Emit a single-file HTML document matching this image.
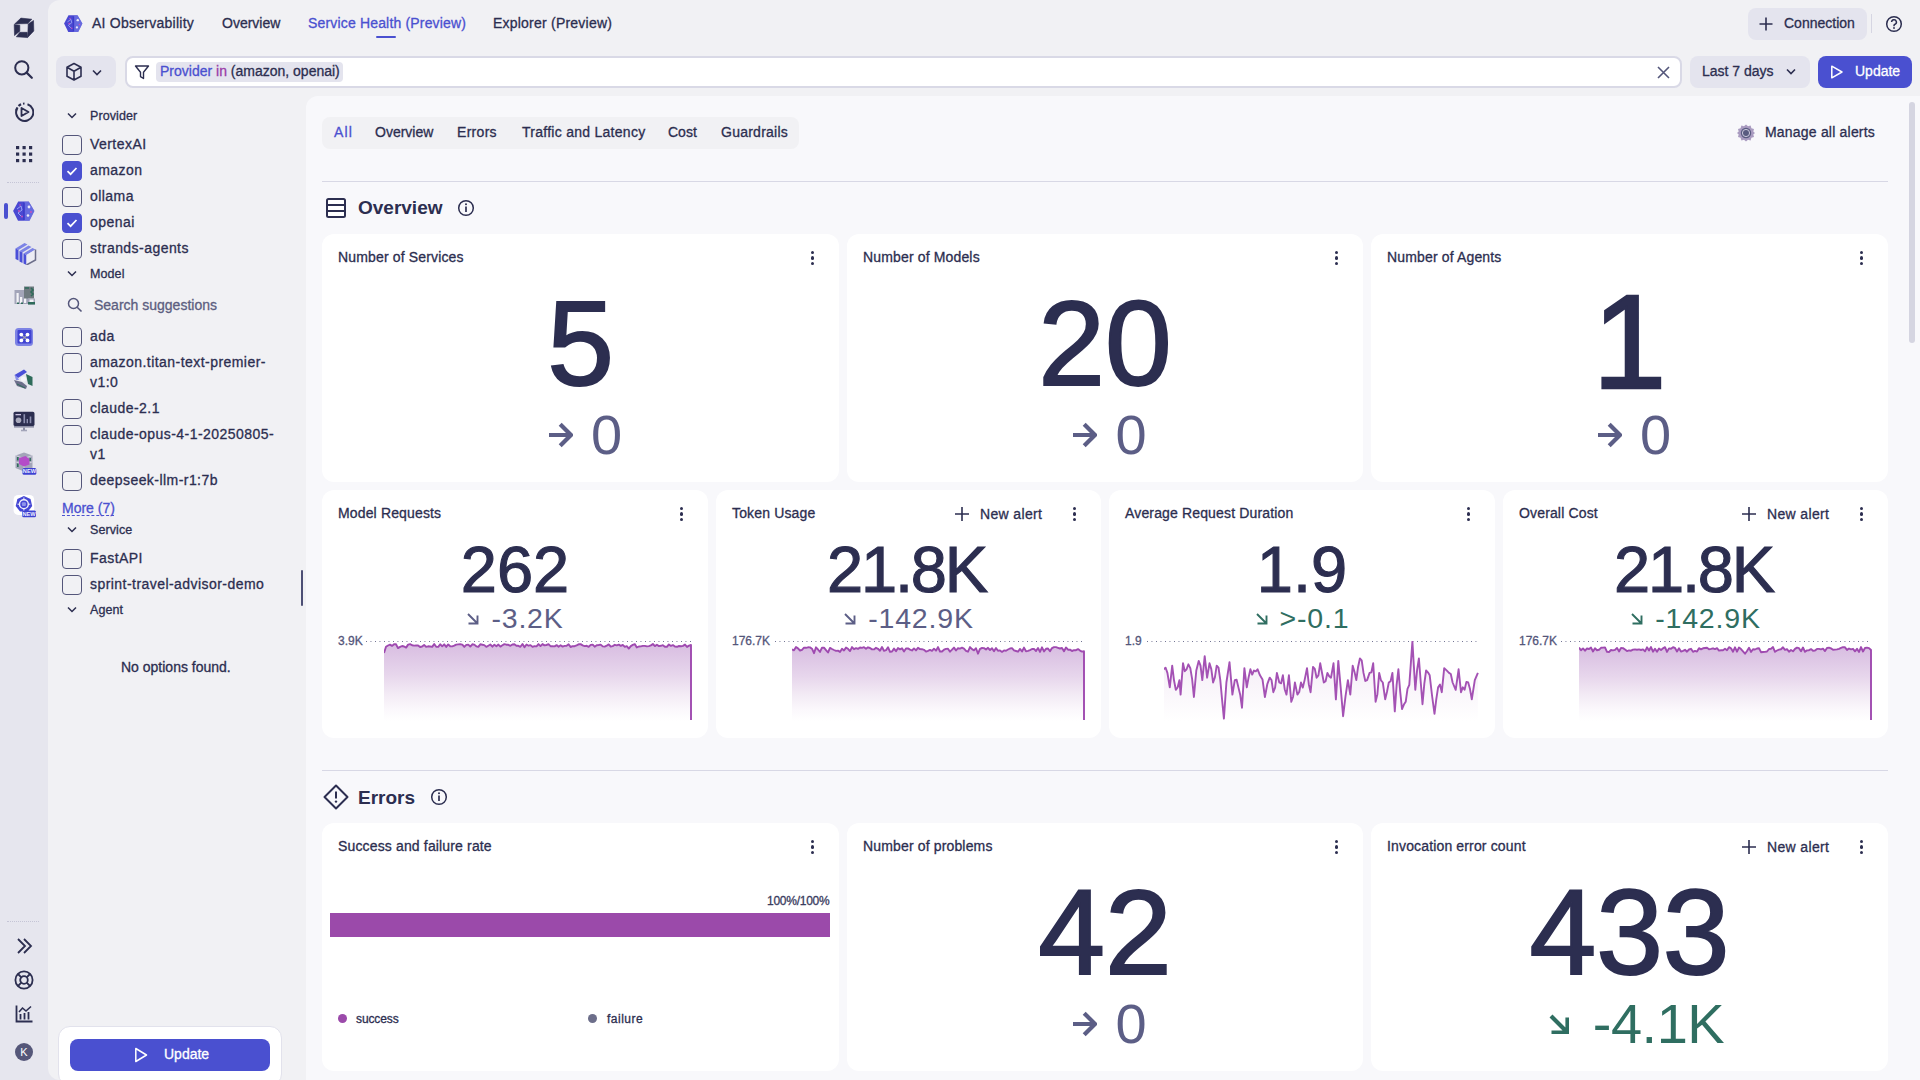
<!DOCTYPE html><html><head><meta charset="utf-8"><style>
*{box-sizing:border-box;margin:0;padding:0}
html,body{width:1920px;height:1080px;overflow:hidden}
body{background:#e6e6ee;font-family:"Liberation Sans",sans-serif;color:#2c2e50;font-size:14px;position:relative}
.a{position:absolute}
.t{position:absolute;white-space:nowrap;line-height:1}
#iconbar{left:0;top:0;width:48px;height:1080px;background:#e6e6ee}
#main{left:48px;top:0;width:1872px;height:1080px;background:#f1f1f4;border-radius:12px 0 0 12px}
#content{left:306px;top:96px;width:1614px;height:984px;background:#f8f8fb;border-top-left-radius:12px}
.card{position:absolute;background:#fff;border-radius:12px}
.ctitle{position:absolute;left:16px;top:15px;font-size:14px;line-height:16px;white-space:nowrap;color:#2c2e50;letter-spacing:0.15px}
.kebab{position:absolute;top:17px;width:4px;height:14px}
.kebab i{position:absolute;left:0;width:3.2px;height:3.2px;border-radius:50%;background:#2c2e50}
.big{position:absolute;left:0;right:0;text-align:center;white-space:nowrap;color:#2c2e50;line-height:1}
.trend{position:absolute;left:0;right:0;text-align:center;white-space:nowrap;line-height:1}
.cb{position:absolute;left:62px;width:20px;height:20px;border:1.5px solid #54567a;border-radius:4px}
.cb.on{background:#4a50d0;border-color:#4a50d0}
.lbl{position:absolute;left:90px;font-size:14px;line-height:20px;white-space:nowrap;letter-spacing:0.45px}
.hdr{position:absolute;left:90px;font-size:12.5px;line-height:14px;white-space:nowrap;letter-spacing:0.1px}
.chev{position:absolute;left:67px}
.t,.lbl,.hdr,.ctitle{-webkit-text-stroke:0.3px currentColor}
</style></head><body>
<div id="iconbar" class="a"></div><div id="main" class="a"></div><div id="content" class="a"></div><svg class="a" style="left:64px;top:15px" width="19" height="17" viewBox="0 0 19 17"><g transform="scale(0.86)"><polygon points="5.2,0.4 15.8,0.4 21.4,10 16.5,19.8 5,19.8 0.1,10" fill="#4a48d2"/><path d="M11 1 H15.8 L21.4 10 L16.5 19.8 H11 Z" fill="#7d86ea" opacity="0.55"/><path d="M11 1.5 V19" stroke="#3a3ac8" stroke-width="1.6"/><path d="M4 8 L8 5 L9 9 L5 12 L8 15" fill="none" stroke="#9aa4f4" stroke-width="1"/><circle cx="16" cy="6" r="1.4" fill="#e8e8f8"/><circle cx="15" cy="14.5" r="1.3" fill="#e8e8f8"/><circle cx="6" cy="10" r="0.9" fill="#d04fb8"/><circle cx="9" cy="15.5" r="0.9" fill="#d04fb8"/><circle cx="18" cy="11" r="0.9" fill="#d04fb8"/><circle cx="7" cy="4" r="0.8" fill="#d04fb8"/></g></svg><div class="t" style="left:92px;top:15px;font-size:14px;line-height:16px;letter-spacing:0.25px">AI Observability</div><div class="t" style="left:222px;top:15px;font-size:14px;line-height:16px">Overview</div><div class="t" style="left:308px;top:15px;font-size:14px;line-height:16px;color:#4a50d0;letter-spacing:0.17px">Service Health (Preview)</div><div class="a" style="left:376px;top:36px;width:20px;height:2px;background:#4a50d0;border-radius:1px"></div><div class="t" style="left:493px;top:15px;font-size:14px;line-height:16px;letter-spacing:0.22px">Explorer (Preview)</div><div class="a" style="left:1748px;top:8px;width:119px;height:32px;background:#e4e4ee;border-radius:8px"></div><svg class="a" style="left:1759px;top:17px" width="14" height="14" viewBox="0 0 14 14"><path d="M7 0.5V13.5M0.5 7H13.5" stroke="#2c2e50" stroke-width="1.6"/></svg><div class="t" style="left:1784px;top:15px;font-size:14px;line-height:16px">Connection</div><div class="a" style="left:1871px;top:14px;width:1px;height:19px;background:#d6d6e2"></div><svg class="a" style="left:1885px;top:15px" width="18" height="18" viewBox="0 0 18 18"><circle cx="9" cy="9" r="7.3" fill="none" stroke="#2c2e50" stroke-width="1.5"/><path d="M6.6 7.1a2.4 2.4 0 1 1 3.4 2.2c-.7.3-1 .8-1 1.5v.4" fill="none" stroke="#2c2e50" stroke-width="1.5"/><circle cx="9" cy="13" r="0.9" fill="#2c2e50"/></svg><div class="a" style="left:56px;top:56px;width:60px;height:32px;background:#e4e4ee;border-radius:8px"></div><svg class="a" style="left:65px;top:62px" width="18" height="20" viewBox="0 0 18 20"><path d="M9 1.5 L16 5.3 V14.2 L9 18 L2 14.2 V5.3 Z M2 5.3 L9 9.2 L16 5.3 M9 9.2 V18" fill="none" stroke="#2c2e50" stroke-width="1.6" stroke-linejoin="round"/></svg><svg class="a" style="left:92px;top:69px" width="10" height="8" viewBox="0 0 10 8"><path d="M1 1.5 L5.0 5.5 L9 1.5" fill="none" stroke="#2c2e50" stroke-width="1.6"/></svg><div class="a" style="left:125px;top:56px;width:1557px;height:32px;background:#fff;border:2px solid #d9d9e6;border-radius:8px"></div><svg class="a" style="left:134px;top:64px" width="16" height="16" viewBox="0 0 16 16"><path d="M1.5 2 H14.5 L9.5 8.2 V14.5 L6.5 12.6 V8.2 Z" fill="none" stroke="#2c2e50" stroke-width="1.4" stroke-linejoin="round"/></svg><div class="a" style="left:156px;top:62px;width:187px;height:20px;background:#e4e4ee;border-radius:4px"></div><div class="t" style="left:160px;top:63px;font-size:14px;line-height:16px"><span style="color:#4a50d0">Provider </span><span style="color:#9a3ca8">in</span> (amazon, openai)</div><svg class="a" style="left:1657px;top:66px" width="13" height="13" viewBox="0 0 13 13"><path d="M1 1L12 12M12 1L1 12" stroke="#54567a" stroke-width="1.6"/></svg><div class="a" style="left:1690px;top:56px;width:120px;height:32px;background:#e4e4ee;border-radius:8px"></div><div class="t" style="left:1702px;top:63px;font-size:14px;line-height:16px">Last 7 days</div><svg class="a" style="left:1786px;top:68px" width="10" height="8" viewBox="0 0 10 8"><path d="M1 1.5 L5.0 5.5 L9 1.5" fill="none" stroke="#2c2e50" stroke-width="1.6"/></svg><div class="a" style="left:1818px;top:56px;width:94px;height:32px;background:#4a50d0;border-radius:8px"></div><svg class="a" style="left:1830px;top:65px" width="14" height="14" viewBox="0 0 14 14"><path d="M1.8 1.2 L12 7 L1.8 12.8 Z" fill="none" stroke="#fff" stroke-width="1.5" stroke-linejoin="round"/></svg><div class="t" style="left:1855px;top:63px;font-size:14px;line-height:16px;color:#fff">Update</div><svg class="a" style="left:67px;top:112px" width="10" height="8" viewBox="0 0 10 8"><path d="M1 1.5 L5.0 5.5 L9 1.5" fill="none" stroke="#2c2e50" stroke-width="1.5"/></svg><div class="hdr" style="top:109px">Provider</div><div class="cb" style="top:135px"></div><div class="lbl" style="top:134px">VertexAI</div><div class="cb on" style="top:161px"></div><svg class="a" style="left:62px;top:161px" width="20" height="20" viewBox="0 0 20 20"><path d="M5.5 10.2 L8.6 13.2 L14.5 7" fill="none" stroke="#fff" stroke-width="1.7"/></svg><div class="lbl" style="top:160px">amazon</div><div class="cb" style="top:187px"></div><div class="lbl" style="top:186px">ollama</div><div class="cb on" style="top:213px"></div><svg class="a" style="left:62px;top:213px" width="20" height="20" viewBox="0 0 20 20"><path d="M5.5 10.2 L8.6 13.2 L14.5 7" fill="none" stroke="#fff" stroke-width="1.7"/></svg><div class="lbl" style="top:212px">openai</div><div class="cb" style="top:239px"></div><div class="lbl" style="top:238px">strands-agents</div><svg class="a" style="left:67px;top:270px" width="10" height="8" viewBox="0 0 10 8"><path d="M1 1.5 L5.0 5.5 L9 1.5" fill="none" stroke="#2c2e50" stroke-width="1.5"/></svg><div class="hdr" style="top:267px">Model</div><svg class="a" style="left:67px;top:297px" width="16" height="16" viewBox="0 0 16 16"><circle cx="6.5" cy="6.5" r="5" fill="none" stroke="#54567a" stroke-width="1.5"/><path d="M10.2 10.2 L14.5 14.5" stroke="#54567a" stroke-width="1.6"/></svg><div class="lbl" style="left:94px;top:295px;color:#5c5e80;letter-spacing:0">Search suggestions</div><div class="cb" style="top:327px"></div><div class="lbl" style="top:326px">ada</div><div class="cb" style="top:353px"></div><div class="lbl" style="top:352px">amazon.titan-text-premier-<br>v1:0</div><div class="cb" style="top:399px"></div><div class="lbl" style="top:398px">claude-2.1</div><div class="cb" style="top:425px"></div><div class="lbl" style="top:424px">claude-opus-4-1-20250805-<br>v1</div><div class="cb" style="top:471px"></div><div class="lbl" style="top:470px">deepseek-llm-r1:7b</div><div class="t" style="left:62px;top:500px;font-size:14px;line-height:16px;color:#4a50d0">More (7)</div><div class="a" style="left:62px;top:515px;width:52px;height:0;border-top:1px dashed #4a50d0"></div><svg class="a" style="left:67px;top:526px" width="10" height="8" viewBox="0 0 10 8"><path d="M1 1.5 L5.0 5.5 L9 1.5" fill="none" stroke="#2c2e50" stroke-width="1.5"/></svg><div class="hdr" style="top:523px">Service</div><div class="cb" style="top:549px"></div><div class="lbl" style="top:548px">FastAPI</div><div class="cb" style="top:575px"></div><div class="lbl" style="top:574px">sprint-travel-advisor-demo</div><svg class="a" style="left:67px;top:606px" width="10" height="8" viewBox="0 0 10 8"><path d="M1 1.5 L5.0 5.5 L9 1.5" fill="none" stroke="#2c2e50" stroke-width="1.5"/></svg><div class="hdr" style="top:603px">Agent</div><div class="t" style="left:121px;top:659px;font-size:14px;line-height:16px">No options found.</div><div class="a" style="left:301px;top:570px;width:2px;height:36px;background:#4d4f75;border-radius:1px"></div><div class="a" style="left:58px;top:1026px;width:224px;height:60px;background:#fff;border:1px solid #e2e2ec;border-radius:12px"></div><div class="a" style="left:70px;top:1039px;width:200px;height:32px;background:#4a50d0;border-radius:8px"></div><svg class="a" style="left:134px;top:1047px" width="14" height="16" viewBox="0 0 14 16"><path d="M1.8 1.5 L12.5 8 L1.8 14.5 Z" fill="none" stroke="#fff" stroke-width="1.5" stroke-linejoin="round"/></svg><div class="t" style="left:164px;top:1046px;font-size:14px;line-height:16px;color:#fff">Update</div><div class="a" style="left:1909px;top:102px;width:6px;height:241px;background:#d5d5e1;border-radius:3px"></div><div class="a" style="left:322px;top:117px;width:477px;height:32px;background:#f1f1f4;border-radius:8px"></div><div class="t" style="left:334px;top:124px;font-size:14px;line-height:16px;letter-spacing:1.2px;color:#4a50d0">All</div><div class="t" style="left:375px;top:124px;font-size:14px;line-height:16px;letter-spacing:0px;">Overview</div><div class="t" style="left:457px;top:124px;font-size:14px;line-height:16px;letter-spacing:0.3px;">Errors</div><div class="t" style="left:522px;top:124px;font-size:14px;line-height:16px;letter-spacing:0.27px;">Traffic and Latency</div><div class="t" style="left:668px;top:124px;font-size:14px;line-height:16px;letter-spacing:0px;">Cost</div><div class="t" style="left:721px;top:124px;font-size:14px;line-height:16px;letter-spacing:0.25px;">Guardrails</div><svg class="a" style="left:1737px;top:124px" width="18" height="18" viewBox="0 0 18 18"><path d="M9 0.5 L11 2.3 L13.6 1.6 L14.4 4.2 L17 5 L16.3 7.6 L18 9 L16.3 10.4 L17 13 L14.4 13.8 L13.6 16.4 L11 15.7 L9 17.5 L7 15.7 L4.4 16.4 L3.6 13.8 L1 13 L1.7 10.4 L0 9 L1.7 7.6 L1 5 L3.6 4.2 L4.4 1.6 L7 2.3 Z" fill="#a99bc0"/><circle cx="9" cy="9" r="5.2" fill="#595b80"/><circle cx="9" cy="9" r="3.6" fill="none" stroke="#d8d4e6" stroke-width="0.9"/></svg><div class="t" style="left:1765px;top:124px;font-size:14px;line-height:16px;letter-spacing:0.2px">Manage all alerts</div><div class="a" style="left:322px;top:181px;width:1566px;height:1px;background:#d8d8e5"></div><svg class="a" style="left:325px;top:197px" width="22" height="22" viewBox="0 0 22 22"><rect x="2" y="2" width="18" height="18" rx="1.5" fill="#fff" stroke="#2c2e50" stroke-width="2"/><path d="M2 8 H20 M2 14 H20" stroke="#2c2e50" stroke-width="2"/></svg><div class="t" style="left:358px;top:198px;font-size:19px;line-height:20px;font-weight:bold;-webkit-text-stroke:0">Overview</div><svg class="a" style="left:457px;top:199px" width="18" height="18" viewBox="0 0 18 18"><circle cx="9" cy="9" r="7.3" fill="none" stroke="#2c2e50" stroke-width="1.5"/><path d="M9 7.6 V13" stroke="#2c2e50" stroke-width="1.7"/><circle cx="9" cy="5.3" r="1" fill="#2c2e50"/></svg><div class="a" style="left:322px;top:770px;width:1566px;height:1px;background:#d8d8e5"></div><svg class="a" style="left:323px;top:784px" width="26" height="26" viewBox="0 0 26 26"><path d="M13 1.5 L24.5 13 L13 24.5 L1.5 13 Z" fill="none" stroke="#2c2e50" stroke-width="2" stroke-linejoin="round"/><path d="M13 7.5 V14.5" stroke="#2c2e50" stroke-width="2"/><circle cx="13" cy="17.6" r="1.2" fill="#2c2e50"/></svg><div class="t" style="left:358px;top:788px;font-size:19px;line-height:20px;font-weight:bold;-webkit-text-stroke:0">Errors</div><svg class="a" style="left:430px;top:788px" width="18" height="18" viewBox="0 0 18 18"><circle cx="9" cy="9" r="7.3" fill="none" stroke="#2c2e50" stroke-width="1.5"/><path d="M9 7.6 V13" stroke="#2c2e50" stroke-width="1.7"/><circle cx="9" cy="5.3" r="1" fill="#2c2e50"/></svg><div class="card" style="left:322px;top:234px;width:517px;height:248px"><div class="ctitle">Number of Services</div><div class="kebab" style="left:489px;top:17px"><i style="top:0"></i><i style="top:5.4px"></i><i style="top:10.8px"></i></div><div class="big" style="top:49px;font-size:120px;-webkit-text-stroke:2px #2c2e50">5</div><div class="trend" style="top:176px;height:50px;display:flex;justify-content:center;align-items:center;font-size:56px;color:#5c5e86;padding-left:10px"><svg width="24" height="28" viewBox="0 0 24 28" style="display:block"><path d="M0 14 H21 M11.2 3.2 L22 14 L11.2 24.8" fill="none" stroke="#5c5e86" stroke-width="4.2"/></svg><span style="margin-left:18px;line-height:50px;letter-spacing:0px">0</span></div></div><div class="card" style="left:847px;top:234px;width:516px;height:248px"><div class="ctitle">Number of Models</div><div class="kebab" style="left:488px;top:17px"><i style="top:0"></i><i style="top:5.4px"></i><i style="top:10.8px"></i></div><div class="big" style="top:49px;font-size:120px;-webkit-text-stroke:2px #2c2e50">20</div><div class="trend" style="top:176px;height:50px;display:flex;justify-content:center;align-items:center;font-size:56px;color:#5c5e86;padding-left:10px"><svg width="24" height="28" viewBox="0 0 24 28" style="display:block"><path d="M0 14 H21 M11.2 3.2 L22 14 L11.2 24.8" fill="none" stroke="#5c5e86" stroke-width="4.2"/></svg><span style="margin-left:18px;line-height:50px;letter-spacing:0px">0</span></div></div><div class="card" style="left:1371px;top:234px;width:517px;height:248px"><div class="ctitle">Number of Agents</div><div class="kebab" style="left:489px;top:17px"><i style="top:0"></i><i style="top:5.4px"></i><i style="top:10.8px"></i></div><div class="big" style="top:42px;font-size:133px;-webkit-text-stroke:2.4px #2c2e50">1</div><div class="trend" style="top:176px;height:50px;display:flex;justify-content:center;align-items:center;font-size:56px;color:#5c5e86;padding-left:10px"><svg width="24" height="28" viewBox="0 0 24 28" style="display:block"><path d="M0 14 H21 M11.2 3.2 L22 14 L11.2 24.8" fill="none" stroke="#5c5e86" stroke-width="4.2"/></svg><span style="margin-left:18px;line-height:50px;letter-spacing:0px">0</span></div></div><div class="card" style="left:322px;top:823px;width:517px;height:248px"><div class="ctitle">Success and failure rate</div><div class="kebab" style="left:489px;top:17px"><i style="top:0"></i><i style="top:5.4px"></i><i style="top:10.8px"></i></div></div><div class="card" style="left:847px;top:823px;width:516px;height:248px"><div class="ctitle">Number of problems</div><div class="kebab" style="left:488px;top:17px"><i style="top:0"></i><i style="top:5.4px"></i><i style="top:10.8px"></i></div><div class="big" style="top:49px;font-size:120px;-webkit-text-stroke:2px #2c2e50">42</div><div class="trend" style="top:176px;height:50px;display:flex;justify-content:center;align-items:center;font-size:56px;color:#5c5e86;padding-left:10px"><svg width="24" height="28" viewBox="0 0 24 28" style="display:block"><path d="M0 14 H21 M11.2 3.2 L22 14 L11.2 24.8" fill="none" stroke="#5c5e86" stroke-width="4.2"/></svg><span style="margin-left:18px;line-height:50px;letter-spacing:0px">0</span></div></div><div class="card" style="left:1371px;top:823px;width:517px;height:248px"><div class="ctitle">Invocation error count</div><div class="kebab" style="left:489px;top:17px"><i style="top:0"></i><i style="top:5.4px"></i><i style="top:10.8px"></i></div><svg class="a" style="left:371px;top:17px" width="14" height="14" viewBox="0 0 14 14"><path d="M7 0V14M0 7H14" stroke="#2c2e50" stroke-width="1.6"/></svg><div class="t" style="left:396px;top:16px;font-size:14px;line-height:16px;letter-spacing:0.35px">New alert</div><div class="big" style="top:49px;font-size:120px;-webkit-text-stroke:2px #2c2e50">433</div><div class="trend" style="top:176px;height:50px;display:flex;justify-content:center;align-items:center;font-size:56px;color:#2f6e61;padding-left:14px"><svg width="20" height="20" viewBox="-1 -1 20 20" style="display:block"><path d="M1 1 L16.5 16.5 M17.5 2.5 V17.5 H1.5" fill="none" stroke="#2f6e61" stroke-width="4.2"/></svg><span style="margin-left:24px;line-height:50px;letter-spacing:-0.5px">-4.1K</span></div></div><div class="card" style="left:322px;top:490px;width:386px;height:248px"><div class="ctitle">Model Requests</div><div class="kebab" style="left:358px;top:17px"><i style="top:0"></i><i style="top:5.4px"></i><i style="top:10.8px"></i></div><div class="big" style="top:47px;font-size:65px;-webkit-text-stroke:1.1px #2c2e50;letter-spacing:0px;text-indent:0px">262</div><div class="trend" style="top:112px;height:32px;display:flex;justify-content:center;align-items:center;font-size:28.5px;color:#5c5e86"><svg width="13" height="13" viewBox="-1 -1 13 13" style="display:block"><path d="M1 1 L9.5 9.5 M10.5 2.5 V10.5 H1.5" fill="none" stroke="#5c5e86" stroke-width="1.9"/></svg><span style="margin-left:12px;line-height:32px;letter-spacing:0.8px">-3.2K</span></div></div><div class="card" style="left:716px;top:490px;width:385px;height:248px"><div class="ctitle">Token Usage</div><div class="kebab" style="left:357px;top:17px"><i style="top:0"></i><i style="top:5.4px"></i><i style="top:10.8px"></i></div><svg class="a" style="left:239px;top:17px" width="14" height="14" viewBox="0 0 14 14"><path d="M7 0V14M0 7H14" stroke="#2c2e50" stroke-width="1.6"/></svg><div class="t" style="left:264px;top:16px;font-size:14px;line-height:16px;letter-spacing:0.35px">New alert</div><div class="big" style="top:47px;font-size:65px;-webkit-text-stroke:1.1px #2c2e50;letter-spacing:-2.2px;text-indent:-3.9600000000000004px">21.8K</div><div class="trend" style="top:112px;height:32px;display:flex;justify-content:center;align-items:center;font-size:28.5px;color:#5c5e86"><svg width="13" height="13" viewBox="-1 -1 13 13" style="display:block"><path d="M1 1 L9.5 9.5 M10.5 2.5 V10.5 H1.5" fill="none" stroke="#5c5e86" stroke-width="1.9"/></svg><span style="margin-left:12px;line-height:32px;letter-spacing:0.8px">-142.9K</span></div></div><div class="card" style="left:1109px;top:490px;width:386px;height:248px"><div class="ctitle">Average Request Duration</div><div class="kebab" style="left:358px;top:17px"><i style="top:0"></i><i style="top:5.4px"></i><i style="top:10.8px"></i></div><div class="big" style="top:47px;font-size:65px;-webkit-text-stroke:1.1px #2c2e50;letter-spacing:0px;text-indent:0px">1.9</div><div class="trend" style="top:112px;height:32px;display:flex;justify-content:center;align-items:center;font-size:28.5px;color:#2f6e61"><svg width="13" height="13" viewBox="-1 -1 13 13" style="display:block"><path d="M1 1 L9.5 9.5 M10.5 2.5 V10.5 H1.5" fill="none" stroke="#2f6e61" stroke-width="1.9"/></svg><span style="margin-left:12px;line-height:32px;letter-spacing:0.8px">&gt;-0.1</span></div></div><div class="card" style="left:1503px;top:490px;width:385px;height:248px"><div class="ctitle">Overall Cost</div><div class="kebab" style="left:357px;top:17px"><i style="top:0"></i><i style="top:5.4px"></i><i style="top:10.8px"></i></div><svg class="a" style="left:239px;top:17px" width="14" height="14" viewBox="0 0 14 14"><path d="M7 0V14M0 7H14" stroke="#2c2e50" stroke-width="1.6"/></svg><div class="t" style="left:264px;top:16px;font-size:14px;line-height:16px;letter-spacing:0.35px">New alert</div><div class="big" style="top:47px;font-size:65px;-webkit-text-stroke:1.1px #2c2e50;letter-spacing:-2.2px;text-indent:-3.9600000000000004px">21.8K</div><div class="trend" style="top:112px;height:32px;display:flex;justify-content:center;align-items:center;font-size:28.5px;color:#2f6e61"><svg width="13" height="13" viewBox="-1 -1 13 13" style="display:block"><path d="M1 1 L9.5 9.5 M10.5 2.5 V10.5 H1.5" fill="none" stroke="#2f6e61" stroke-width="1.9"/></svg><span style="margin-left:12px;line-height:32px;letter-spacing:0.8px">-142.9K</span></div></div><div class="t" style="left:338px;top:635px;font-size:12px;line-height:12px;color:#54567a">3.9K</div><div class="a" style="left:366px;top:641px;width:326px;height:1px;background-image:linear-gradient(90deg,#6b6d8e 1px,transparent 1px);background-size:4.5px 1px"></div><svg class="a" style="left:384px;top:639px" width="310" height="83" viewBox="0 -2 310 83"><defs><linearGradient id="g11" x1="0" y1="0" x2="0" y2="1"><stop offset="0" stop-color="#d8bde1"/><stop offset="0.4" stop-color="#e7d6ec"/><stop offset="0.65" stop-color="#f3ebf5"/><stop offset="0.85" stop-color="#fbf8fc"/><stop offset="1" stop-color="#ffffff"/></linearGradient></defs><path d="M0.0 12.0 L2.0 5.8 L4.0 4.5 L6.0 3.6 L8.0 4.9 L10.0 3.3 L12.0 3.3 L14.0 7.1 L16.1 5.9 L18.1 5.0 L20.1 5.5 L22.1 6.6 L24.1 3.6 L26.1 3.1 L28.1 4.3 L30.1 4.6 L32.1 4.5 L34.1 4.4 L36.1 6.0 L38.1 5.5 L40.1 3.9 L42.1 5.9 L44.1 5.3 L46.2 5.5 L48.2 5.9 L50.2 3.0 L52.2 5.7 L54.2 5.9 L56.2 3.2 L58.2 5.3 L60.2 3.3 L62.2 5.9 L64.2 3.4 L66.2 5.3 L68.2 5.4 L70.2 4.7 L72.2 3.6 L74.2 3.4 L76.2 3.3 L78.3 3.6 L80.3 5.9 L82.3 3.9 L84.3 3.6 L86.3 5.6 L88.3 3.3 L90.3 3.6 L92.3 5.3 L94.3 5.9 L96.3 3.3 L98.3 3.7 L100.3 4.1 L102.3 5.9 L104.3 4.7 L106.3 3.5 L108.4 5.7 L110.4 3.7 L112.4 5.2 L114.4 3.6 L116.4 5.6 L118.4 4.3 L120.4 3.1 L122.4 3.7 L124.4 3.8 L126.4 4.8 L128.4 3.5 L130.4 3.2 L132.4 4.7 L134.4 4.8 L136.4 5.8 L138.5 3.0 L140.5 6.3 L142.5 3.5 L144.5 4.7 L146.5 4.1 L148.5 5.9 L150.5 5.1 L152.5 5.4 L154.5 3.1 L156.5 5.1 L158.5 3.1 L160.5 4.4 L162.5 4.0 L164.5 3.2 L166.5 5.2 L168.5 5.2 L170.6 5.4 L172.6 4.1 L174.6 5.7 L176.6 4.3 L178.6 5.6 L180.6 4.9 L182.6 4.7 L184.6 3.2 L186.6 6.0 L188.6 5.2 L190.6 5.2 L192.6 4.3 L194.6 3.3 L196.6 3.1 L198.6 4.4 L200.7 5.1 L202.7 4.8 L204.7 5.8 L206.7 3.9 L208.7 3.6 L210.7 5.7 L212.7 4.3 L214.7 4.0 L216.7 3.6 L218.7 5.4 L220.7 5.6 L222.7 4.7 L224.7 3.4 L226.7 5.5 L228.7 5.1 L230.8 3.8 L232.8 4.4 L234.8 3.6 L236.8 4.9 L238.8 3.9 L240.8 5.9 L242.8 5.2 L244.8 7.6 L246.8 5.1 L248.8 3.9 L250.8 3.1 L252.8 6.4 L254.8 5.5 L256.8 5.4 L258.8 4.9 L260.8 4.9 L262.9 5.4 L264.9 5.1 L266.9 4.4 L268.9 3.0 L270.9 5.1 L272.9 3.8 L274.9 5.1 L276.9 4.8 L278.9 4.2 L280.9 5.7 L282.9 5.8 L284.9 3.4 L286.9 4.9 L288.9 4.1 L290.9 5.6 L293.0 5.8 L295.0 5.0 L297.0 5.2 L299.0 4.9 L301.0 3.6 L303.0 5.9 L305.0 4.6 L307.0 4.0 L307.0 80 L0 80 Z" fill="url(#g11)"/><path d="M0.0 12.0 L2.0 5.8 L4.0 4.5 L6.0 3.6 L8.0 4.9 L10.0 3.3 L12.0 3.3 L14.0 7.1 L16.1 5.9 L18.1 5.0 L20.1 5.5 L22.1 6.6 L24.1 3.6 L26.1 3.1 L28.1 4.3 L30.1 4.6 L32.1 4.5 L34.1 4.4 L36.1 6.0 L38.1 5.5 L40.1 3.9 L42.1 5.9 L44.1 5.3 L46.2 5.5 L48.2 5.9 L50.2 3.0 L52.2 5.7 L54.2 5.9 L56.2 3.2 L58.2 5.3 L60.2 3.3 L62.2 5.9 L64.2 3.4 L66.2 5.3 L68.2 5.4 L70.2 4.7 L72.2 3.6 L74.2 3.4 L76.2 3.3 L78.3 3.6 L80.3 5.9 L82.3 3.9 L84.3 3.6 L86.3 5.6 L88.3 3.3 L90.3 3.6 L92.3 5.3 L94.3 5.9 L96.3 3.3 L98.3 3.7 L100.3 4.1 L102.3 5.9 L104.3 4.7 L106.3 3.5 L108.4 5.7 L110.4 3.7 L112.4 5.2 L114.4 3.6 L116.4 5.6 L118.4 4.3 L120.4 3.1 L122.4 3.7 L124.4 3.8 L126.4 4.8 L128.4 3.5 L130.4 3.2 L132.4 4.7 L134.4 4.8 L136.4 5.8 L138.5 3.0 L140.5 6.3 L142.5 3.5 L144.5 4.7 L146.5 4.1 L148.5 5.9 L150.5 5.1 L152.5 5.4 L154.5 3.1 L156.5 5.1 L158.5 3.1 L160.5 4.4 L162.5 4.0 L164.5 3.2 L166.5 5.2 L168.5 5.2 L170.6 5.4 L172.6 4.1 L174.6 5.7 L176.6 4.3 L178.6 5.6 L180.6 4.9 L182.6 4.7 L184.6 3.2 L186.6 6.0 L188.6 5.2 L190.6 5.2 L192.6 4.3 L194.6 3.3 L196.6 3.1 L198.6 4.4 L200.7 5.1 L202.7 4.8 L204.7 5.8 L206.7 3.9 L208.7 3.6 L210.7 5.7 L212.7 4.3 L214.7 4.0 L216.7 3.6 L218.7 5.4 L220.7 5.6 L222.7 4.7 L224.7 3.4 L226.7 5.5 L228.7 5.1 L230.8 3.8 L232.8 4.4 L234.8 3.6 L236.8 4.9 L238.8 3.9 L240.8 5.9 L242.8 5.2 L244.8 7.6 L246.8 5.1 L248.8 3.9 L250.8 3.1 L252.8 6.4 L254.8 5.5 L256.8 5.4 L258.8 4.9 L260.8 4.9 L262.9 5.4 L264.9 5.1 L266.9 4.4 L268.9 3.0 L270.9 5.1 L272.9 3.8 L274.9 5.1 L276.9 4.8 L278.9 4.2 L280.9 5.7 L282.9 5.8 L284.9 3.4 L286.9 4.9 L288.9 4.1 L290.9 5.6 L293.0 5.8 L295.0 5.0 L297.0 5.2 L299.0 4.9 L301.0 3.6 L303.0 5.9 L305.0 4.6 L307.0 4.0 L307.0 79" fill="none" stroke="#9f4ab0" stroke-width="1.9" stroke-linejoin="round"/></svg><div class="t" style="left:732px;top:635px;font-size:12px;line-height:12px;color:#54567a">176.7K</div><div class="a" style="left:775px;top:641px;width:308px;height:1px;background-image:linear-gradient(90deg,#6b6d8e 1px,transparent 1px);background-size:4.5px 1px"></div><svg class="a" style="left:792px;top:639px" width="295" height="83" viewBox="0 -2 295 83"><defs><linearGradient id="g12" x1="0" y1="0" x2="0" y2="1"><stop offset="0" stop-color="#d8bde1"/><stop offset="0.4" stop-color="#e7d6ec"/><stop offset="0.65" stop-color="#f3ebf5"/><stop offset="0.85" stop-color="#fbf8fc"/><stop offset="1" stop-color="#ffffff"/></linearGradient></defs><path d="M0.0 8.4 L2.0 9.3 L4.0 6.1 L6.0 7.4 L8.0 9.5 L10.0 8.8 L12.0 6.7 L14.0 6.8 L16.0 6.3 L18.0 6.4 L20.0 7.7 L22.0 12.2 L24.0 6.3 L26.0 8.5 L28.0 10.9 L30.0 6.6 L32.0 6.7 L34.0 9.1 L36.0 11.5 L38.0 6.9 L40.0 8.0 L42.0 9.0 L44.0 9.9 L46.0 9.6 L48.0 10.9 L50.0 7.8 L52.0 9.5 L54.0 6.6 L56.0 7.8 L58.0 10.1 L60.0 6.1 L62.0 8.2 L64.0 7.1 L66.0 7.9 L68.0 6.5 L70.0 6.9 L72.0 6.2 L74.0 7.7 L76.0 6.3 L78.0 7.0 L80.0 8.4 L82.0 8.4 L84.0 6.8 L86.0 7.8 L88.0 9.7 L90.0 6.0 L92.0 9.9 L94.0 9.2 L96.0 6.2 L98.0 10.9 L100.0 10.5 L102.0 7.6 L104.0 10.2 L106.0 7.1 L108.0 8.4 L110.0 7.3 L112.0 10.5 L114.0 7.5 L116.0 7.4 L118.0 8.6 L120.0 9.5 L122.0 7.4 L124.0 9.4 L126.0 6.7 L128.0 8.1 L130.0 8.2 L132.0 8.8 L134.0 10.6 L136.0 9.8 L138.0 8.9 L140.0 9.9 L142.0 7.7 L144.0 9.7 L146.0 6.1 L148.0 10.5 L150.0 10.5 L152.0 8.7 L154.0 7.9 L156.0 7.8 L158.0 10.7 L160.0 8.7 L162.0 6.6 L164.0 9.5 L166.0 7.2 L168.0 7.6 L170.0 6.7 L172.0 7.6 L174.0 9.8 L176.0 10.7 L178.0 6.1 L180.0 8.2 L182.0 9.3 L184.0 7.2 L186.0 12.7 L188.0 7.8 L190.0 7.0 L192.0 7.1 L194.0 8.5 L196.0 6.8 L198.0 9.0 L200.0 7.2 L202.0 10.3 L204.0 7.1 L206.0 9.8 L208.0 9.4 L210.0 10.9 L212.0 9.4 L214.0 9.7 L216.0 8.5 L218.0 7.5 L220.0 7.1 L222.0 9.3 L224.0 10.0 L226.0 10.7 L228.0 7.9 L230.0 10.5 L232.0 6.6 L234.0 10.2 L236.0 9.9 L238.0 9.1 L240.0 8.0 L242.0 7.9 L244.0 10.0 L246.0 7.0 L248.0 10.9 L250.0 6.3 L252.0 10.4 L254.0 7.8 L256.0 7.5 L258.0 10.3 L260.0 7.1 L262.0 6.1 L264.0 6.1 L266.0 6.8 L268.0 7.5 L270.0 6.9 L272.0 10.3 L274.0 6.5 L276.0 8.7 L278.0 8.6 L280.0 10.0 L282.0 9.2 L284.0 9.2 L286.0 8.1 L288.0 9.6 L290.0 10.6 L292.0 10.3 L292.0 80 L0 80 Z" fill="url(#g12)"/><path d="M0.0 8.4 L2.0 9.3 L4.0 6.1 L6.0 7.4 L8.0 9.5 L10.0 8.8 L12.0 6.7 L14.0 6.8 L16.0 6.3 L18.0 6.4 L20.0 7.7 L22.0 12.2 L24.0 6.3 L26.0 8.5 L28.0 10.9 L30.0 6.6 L32.0 6.7 L34.0 9.1 L36.0 11.5 L38.0 6.9 L40.0 8.0 L42.0 9.0 L44.0 9.9 L46.0 9.6 L48.0 10.9 L50.0 7.8 L52.0 9.5 L54.0 6.6 L56.0 7.8 L58.0 10.1 L60.0 6.1 L62.0 8.2 L64.0 7.1 L66.0 7.9 L68.0 6.5 L70.0 6.9 L72.0 6.2 L74.0 7.7 L76.0 6.3 L78.0 7.0 L80.0 8.4 L82.0 8.4 L84.0 6.8 L86.0 7.8 L88.0 9.7 L90.0 6.0 L92.0 9.9 L94.0 9.2 L96.0 6.2 L98.0 10.9 L100.0 10.5 L102.0 7.6 L104.0 10.2 L106.0 7.1 L108.0 8.4 L110.0 7.3 L112.0 10.5 L114.0 7.5 L116.0 7.4 L118.0 8.6 L120.0 9.5 L122.0 7.4 L124.0 9.4 L126.0 6.7 L128.0 8.1 L130.0 8.2 L132.0 8.8 L134.0 10.6 L136.0 9.8 L138.0 8.9 L140.0 9.9 L142.0 7.7 L144.0 9.7 L146.0 6.1 L148.0 10.5 L150.0 10.5 L152.0 8.7 L154.0 7.9 L156.0 7.8 L158.0 10.7 L160.0 8.7 L162.0 6.6 L164.0 9.5 L166.0 7.2 L168.0 7.6 L170.0 6.7 L172.0 7.6 L174.0 9.8 L176.0 10.7 L178.0 6.1 L180.0 8.2 L182.0 9.3 L184.0 7.2 L186.0 12.7 L188.0 7.8 L190.0 7.0 L192.0 7.1 L194.0 8.5 L196.0 6.8 L198.0 9.0 L200.0 7.2 L202.0 10.3 L204.0 7.1 L206.0 9.8 L208.0 9.4 L210.0 10.9 L212.0 9.4 L214.0 9.7 L216.0 8.5 L218.0 7.5 L220.0 7.1 L222.0 9.3 L224.0 10.0 L226.0 10.7 L228.0 7.9 L230.0 10.5 L232.0 6.6 L234.0 10.2 L236.0 9.9 L238.0 9.1 L240.0 8.0 L242.0 7.9 L244.0 10.0 L246.0 7.0 L248.0 10.9 L250.0 6.3 L252.0 10.4 L254.0 7.8 L256.0 7.5 L258.0 10.3 L260.0 7.1 L262.0 6.1 L264.0 6.1 L266.0 6.8 L268.0 7.5 L270.0 6.9 L272.0 10.3 L274.0 6.5 L276.0 8.7 L278.0 8.6 L280.0 10.0 L282.0 9.2 L284.0 9.2 L286.0 8.1 L288.0 9.6 L290.0 10.6 L292.0 10.3 L292.0 79" fill="none" stroke="#9f4ab0" stroke-width="1.9" stroke-linejoin="round"/></svg><div class="t" style="left:1125px;top:635px;font-size:12px;line-height:12px;color:#54567a">1.9</div><div class="a" style="left:1147px;top:641px;width:330px;height:1px;background-image:linear-gradient(90deg,#6b6d8e 1px,transparent 1px);background-size:4.5px 1px"></div><svg class="a" style="left:1164px;top:641px" width="318" height="82" viewBox="0 0 318 82"><defs><linearGradient id="gl" x1="0" y1="0" x2="0" y2="1"><stop offset="0" stop-color="#f1e8f4"/><stop offset="1" stop-color="#ffffff"/></linearGradient></defs><path d="M-0.2 28.3 L1.6 26.7 L3.4 31.9 L5.8 46.4 L8.2 24.7 L10.0 39.3 L11.8 48.8 L13.6 46.5 L15.4 39.1 L16.6 53.6 L19.0 22.3 L20.8 30.2 L22.6 28.3 L24.4 23.3 L26.3 27.1 L28.1 37.8 L29.9 56.0 L32.3 29.5 L34.7 19.9 L36.5 24.6 L38.3 39.1 L40.7 15.1 L43.1 36.7 L45.5 22.3 L47.3 28.1 L49.1 41.5 L50.9 36.4 L52.7 24.7 L54.5 26.7 L56.3 39.1 L58.1 58.8 L59.9 77.6 L62.4 41.5 L65.5 21.1 L68.4 53.6 L70.8 39.1 L72.6 38.7 L74.4 46.4 L76.2 53.7 L78.0 66.8 L80.4 27.1 L82.8 46.4 L84.6 36.4 L86.4 28.3 L88.2 33.6 L90.0 29.5 L91.8 30.4 L93.6 28.3 L96.0 34.3 L98.5 38.4 L100.9 56.0 L103.3 43.2 L105.7 36.7 L107.5 39.0 L109.3 51.2 L111.1 46.7 L112.9 31.9 L115.3 41.5 L117.1 42.3 L118.9 34.3 L120.7 48.2 L122.5 53.6 L124.9 34.3 L127.3 60.8 L129.1 55.7 L130.9 41.5 L133.4 53.6 L135.2 51.0 L137.0 41.5 L138.8 46.6 L140.6 39.1 L143.0 27.1 L144.8 43.2 L146.6 51.2 L149.0 25.9 L150.8 27.9 L152.6 36.7 L154.4 34.4 L156.2 22.3 L158.0 31.7 L159.8 41.5 L161.6 40.3 L163.4 31.9 L165.2 35.2 L167.0 36.7 L169.5 22.3 L171.9 58.4 L174.3 19.9 L176.7 46.6 L179.1 75.2 L181.5 55.3 L183.9 39.1 L186.3 53.6 L188.7 24.7 L190.5 30.9 L192.3 39.1 L194.1 25.7 L195.9 17.5 L197.7 19.3 L199.5 31.9 L201.3 40.0 L203.1 39.1 L205.6 31.9 L207.4 31.3 L209.2 22.3 L211.6 60.8 L213.4 53.2 L215.2 31.9 L217.0 39.4 L218.8 41.5 L221.2 58.4 L223.0 50.7 L224.8 41.5 L226.6 40.2 L228.4 31.9 L230.8 70.4 L232.6 44.2 L234.4 28.3 L236.2 50.6 L238.0 68.0 L239.9 63.6 L241.7 60.8 L243.5 47.8 L245.3 43.9 L248.4 0.6 L251.3 48.8 L253.1 29.0 L254.9 17.5 L256.7 40.7 L258.5 63.2 L260.3 42.9 L262.1 29.5 L263.9 31.3 L265.7 34.3 L268.1 55.0 L270.5 72.8 L272.3 58.1 L274.1 46.4 L276.0 43.6 L277.8 51.2 L280.2 27.1 L282.6 29.4 L285.0 31.9 L286.8 33.0 L288.6 41.5 L291.7 48.8 L294.6 28.3 L297.0 51.2 L298.8 46.3 L300.6 48.8 L302.4 40.9 L304.2 41.5 L306.0 48.1 L307.8 58.4 L310.8 39.2 L313.9 31.9 L313.9 80 L-0.2 80 Z" fill="url(#gl)"/><path d="M-0.2 28.3 L1.6 26.7 L3.4 31.9 L5.8 46.4 L8.2 24.7 L10.0 39.3 L11.8 48.8 L13.6 46.5 L15.4 39.1 L16.6 53.6 L19.0 22.3 L20.8 30.2 L22.6 28.3 L24.4 23.3 L26.3 27.1 L28.1 37.8 L29.9 56.0 L32.3 29.5 L34.7 19.9 L36.5 24.6 L38.3 39.1 L40.7 15.1 L43.1 36.7 L45.5 22.3 L47.3 28.1 L49.1 41.5 L50.9 36.4 L52.7 24.7 L54.5 26.7 L56.3 39.1 L58.1 58.8 L59.9 77.6 L62.4 41.5 L65.5 21.1 L68.4 53.6 L70.8 39.1 L72.6 38.7 L74.4 46.4 L76.2 53.7 L78.0 66.8 L80.4 27.1 L82.8 46.4 L84.6 36.4 L86.4 28.3 L88.2 33.6 L90.0 29.5 L91.8 30.4 L93.6 28.3 L96.0 34.3 L98.5 38.4 L100.9 56.0 L103.3 43.2 L105.7 36.7 L107.5 39.0 L109.3 51.2 L111.1 46.7 L112.9 31.9 L115.3 41.5 L117.1 42.3 L118.9 34.3 L120.7 48.2 L122.5 53.6 L124.9 34.3 L127.3 60.8 L129.1 55.7 L130.9 41.5 L133.4 53.6 L135.2 51.0 L137.0 41.5 L138.8 46.6 L140.6 39.1 L143.0 27.1 L144.8 43.2 L146.6 51.2 L149.0 25.9 L150.8 27.9 L152.6 36.7 L154.4 34.4 L156.2 22.3 L158.0 31.7 L159.8 41.5 L161.6 40.3 L163.4 31.9 L165.2 35.2 L167.0 36.7 L169.5 22.3 L171.9 58.4 L174.3 19.9 L176.7 46.6 L179.1 75.2 L181.5 55.3 L183.9 39.1 L186.3 53.6 L188.7 24.7 L190.5 30.9 L192.3 39.1 L194.1 25.7 L195.9 17.5 L197.7 19.3 L199.5 31.9 L201.3 40.0 L203.1 39.1 L205.6 31.9 L207.4 31.3 L209.2 22.3 L211.6 60.8 L213.4 53.2 L215.2 31.9 L217.0 39.4 L218.8 41.5 L221.2 58.4 L223.0 50.7 L224.8 41.5 L226.6 40.2 L228.4 31.9 L230.8 70.4 L232.6 44.2 L234.4 28.3 L236.2 50.6 L238.0 68.0 L239.9 63.6 L241.7 60.8 L243.5 47.8 L245.3 43.9 L248.4 0.6 L251.3 48.8 L253.1 29.0 L254.9 17.5 L256.7 40.7 L258.5 63.2 L260.3 42.9 L262.1 29.5 L263.9 31.3 L265.7 34.3 L268.1 55.0 L270.5 72.8 L272.3 58.1 L274.1 46.4 L276.0 43.6 L277.8 51.2 L280.2 27.1 L282.6 29.4 L285.0 31.9 L286.8 33.0 L288.6 41.5 L291.7 48.8 L294.6 28.3 L297.0 51.2 L298.8 46.3 L300.6 48.8 L302.4 40.9 L304.2 41.5 L306.0 48.1 L307.8 58.4 L310.8 39.2 L313.9 31.9" fill="none" stroke="#a452b4" stroke-width="1.9" stroke-linejoin="round"/></svg><div class="t" style="left:1519px;top:635px;font-size:12px;line-height:12px;color:#54567a">176.7K</div><div class="a" style="left:1561px;top:641px;width:308px;height:1px;background-image:linear-gradient(90deg,#6b6d8e 1px,transparent 1px);background-size:4.5px 1px"></div><svg class="a" style="left:1579px;top:639px" width="295" height="83" viewBox="0 -2 295 83"><defs><linearGradient id="g14" x1="0" y1="0" x2="0" y2="1"><stop offset="0" stop-color="#d8bde1"/><stop offset="0.4" stop-color="#e7d6ec"/><stop offset="0.65" stop-color="#f3ebf5"/><stop offset="0.85" stop-color="#fbf8fc"/><stop offset="1" stop-color="#ffffff"/></linearGradient></defs><path d="M0.0 6.5 L2.0 9.3 L4.0 7.4 L6.0 9.7 L8.0 7.5 L10.0 8.0 L12.0 6.6 L14.0 10.5 L16.0 7.3 L18.0 9.2 L20.0 8.8 L22.0 6.8 L24.0 6.6 L26.0 6.4 L28.0 10.9 L30.0 11.0 L32.0 9.0 L34.0 9.4 L36.0 8.9 L38.0 6.9 L40.0 10.4 L42.0 7.0 L44.0 7.1 L46.0 8.5 L48.0 10.1 L50.0 9.4 L52.0 9.7 L54.0 8.6 L56.0 8.4 L58.0 8.7 L60.0 8.4 L62.0 9.0 L64.0 8.4 L66.0 10.3 L68.0 6.3 L70.0 9.5 L72.0 6.1 L74.0 10.7 L76.0 7.7 L78.0 10.7 L80.0 7.5 L82.0 9.1 L84.0 7.3 L86.0 6.2 L88.0 10.9 L90.0 7.4 L92.0 7.8 L94.0 6.2 L96.0 7.0 L98.0 10.4 L100.0 7.2 L102.0 10.6 L104.0 9.8 L106.0 8.8 L108.0 10.7 L110.0 8.5 L112.0 7.8 L114.0 10.8 L116.0 9.9 L118.0 10.6 L120.0 7.2 L122.0 8.3 L124.0 7.3 L126.0 7.0 L128.0 6.7 L130.0 8.2 L132.0 7.9 L134.0 7.3 L136.0 8.1 L138.0 7.1 L140.0 9.6 L142.0 9.3 L144.0 9.2 L146.0 7.8 L148.0 9.3 L150.0 6.2 L152.0 7.3 L154.0 10.7 L156.0 6.3 L158.0 10.7 L160.0 6.5 L162.0 8.1 L164.0 10.4 L166.0 12.7 L168.0 10.0 L170.0 6.7 L172.0 10.9 L174.0 8.2 L176.0 8.5 L178.0 7.5 L180.0 7.2 L182.0 11.2 L184.0 11.0 L186.0 10.9 L188.0 10.5 L190.0 8.0 L192.0 7.7 L194.0 6.1 L196.0 10.8 L198.0 9.5 L200.0 8.6 L202.0 8.2 L204.0 6.3 L206.0 8.9 L208.0 8.1 L210.0 10.8 L212.0 9.0 L214.0 10.3 L216.0 7.9 L218.0 6.6 L220.0 7.2 L222.0 10.3 L224.0 6.5 L226.0 10.8 L228.0 9.4 L230.0 9.2 L232.0 8.1 L234.0 9.7 L236.0 9.5 L238.0 7.9 L240.0 7.9 L242.0 8.4 L244.0 7.7 L246.0 10.1 L248.0 6.9 L250.0 6.7 L252.0 7.4 L254.0 8.7 L256.0 8.6 L258.0 8.4 L260.0 7.8 L262.0 6.9 L264.0 6.1 L266.0 6.3 L268.0 8.9 L270.0 7.5 L272.0 8.4 L274.0 7.8 L276.0 10.3 L278.0 7.8 L280.0 11.0 L282.0 6.1 L284.0 10.5 L286.0 7.0 L288.0 6.6 L290.0 7.1 L292.0 9.0 L292.0 80 L0 80 Z" fill="url(#g14)"/><path d="M0.0 6.5 L2.0 9.3 L4.0 7.4 L6.0 9.7 L8.0 7.5 L10.0 8.0 L12.0 6.6 L14.0 10.5 L16.0 7.3 L18.0 9.2 L20.0 8.8 L22.0 6.8 L24.0 6.6 L26.0 6.4 L28.0 10.9 L30.0 11.0 L32.0 9.0 L34.0 9.4 L36.0 8.9 L38.0 6.9 L40.0 10.4 L42.0 7.0 L44.0 7.1 L46.0 8.5 L48.0 10.1 L50.0 9.4 L52.0 9.7 L54.0 8.6 L56.0 8.4 L58.0 8.7 L60.0 8.4 L62.0 9.0 L64.0 8.4 L66.0 10.3 L68.0 6.3 L70.0 9.5 L72.0 6.1 L74.0 10.7 L76.0 7.7 L78.0 10.7 L80.0 7.5 L82.0 9.1 L84.0 7.3 L86.0 6.2 L88.0 10.9 L90.0 7.4 L92.0 7.8 L94.0 6.2 L96.0 7.0 L98.0 10.4 L100.0 7.2 L102.0 10.6 L104.0 9.8 L106.0 8.8 L108.0 10.7 L110.0 8.5 L112.0 7.8 L114.0 10.8 L116.0 9.9 L118.0 10.6 L120.0 7.2 L122.0 8.3 L124.0 7.3 L126.0 7.0 L128.0 6.7 L130.0 8.2 L132.0 7.9 L134.0 7.3 L136.0 8.1 L138.0 7.1 L140.0 9.6 L142.0 9.3 L144.0 9.2 L146.0 7.8 L148.0 9.3 L150.0 6.2 L152.0 7.3 L154.0 10.7 L156.0 6.3 L158.0 10.7 L160.0 6.5 L162.0 8.1 L164.0 10.4 L166.0 12.7 L168.0 10.0 L170.0 6.7 L172.0 10.9 L174.0 8.2 L176.0 8.5 L178.0 7.5 L180.0 7.2 L182.0 11.2 L184.0 11.0 L186.0 10.9 L188.0 10.5 L190.0 8.0 L192.0 7.7 L194.0 6.1 L196.0 10.8 L198.0 9.5 L200.0 8.6 L202.0 8.2 L204.0 6.3 L206.0 8.9 L208.0 8.1 L210.0 10.8 L212.0 9.0 L214.0 10.3 L216.0 7.9 L218.0 6.6 L220.0 7.2 L222.0 10.3 L224.0 6.5 L226.0 10.8 L228.0 9.4 L230.0 9.2 L232.0 8.1 L234.0 9.7 L236.0 9.5 L238.0 7.9 L240.0 7.9 L242.0 8.4 L244.0 7.7 L246.0 10.1 L248.0 6.9 L250.0 6.7 L252.0 7.4 L254.0 8.7 L256.0 8.6 L258.0 8.4 L260.0 7.8 L262.0 6.9 L264.0 6.1 L266.0 6.3 L268.0 8.9 L270.0 7.5 L272.0 8.4 L274.0 7.8 L276.0 10.3 L278.0 7.8 L280.0 11.0 L282.0 6.1 L284.0 10.5 L286.0 7.0 L288.0 6.6 L290.0 7.1 L292.0 9.0 L292.0 79" fill="none" stroke="#9f4ab0" stroke-width="1.9" stroke-linejoin="round"/></svg><div class="t" style="left:767px;top:895px;font-size:12px;line-height:12px;color:#3a3c60;letter-spacing:-0.25px">100%/100%</div><div class="a" style="left:330px;top:913px;width:500px;height:24px;background:#9b4aaa"></div><div class="a" style="left:338px;top:1014px;width:9px;height:9px;border-radius:50%;background:#9b4aaa"></div><div class="t" style="left:356px;top:1013px;font-size:12px;line-height:12px;letter-spacing:-0.1px">success</div><div class="a" style="left:588px;top:1014px;width:9px;height:9px;border-radius:50%;background:#6c6e8a"></div><div class="t" style="left:607px;top:1013px;font-size:12px;line-height:12px;letter-spacing:0.5px">failure</div><svg class="a" style="left:10px;top:14px" width="28" height="28" viewBox="0 0 28 28"><path d="M10.9 4.1 L21.8 5.2 L17.9 9.6 L4.7 9.9 Z M4.2 10.5 L9.8 11.2 V17.2 L4.5 21.5 Z M6.3 22.8 L9.8 18.3 H17.2 L17.5 23.6 Z M18.2 10 L23.5 6.5 L23.8 17 L17.7 23.4 Z" fill="#2c2e50" stroke="#2c2e50" stroke-width="0.6" stroke-linejoin="round"/></svg><svg class="a" style="left:13px;top:59px" width="20" height="20" viewBox="0 0 20 20"><circle cx="8.8" cy="8.8" r="6.6" fill="none" stroke="#2c2e50" stroke-width="2"/><path d="M13.6 13.6 L18.8 18.8" stroke="#2c2e50" stroke-width="2.2" stroke-linecap="round"/></svg><svg class="a" style="left:14px;top:102px" width="20" height="20" viewBox="0 0 20 20"><path d="M13.5 2.2 A8.6 8.6 0 1 1 3.6 5.5" fill="none" stroke="#2c2e50" stroke-width="2"/><path d="M2.2 8.5 A8.6 8.6 0 0 1 10.5 1.5" fill="none" stroke="#2c2e50" stroke-width="2" stroke-dasharray="3 2"/><path d="M7.5 6 L14.5 10 L7.5 14 Z" fill="none" stroke="#2c2e50" stroke-width="1.8" stroke-linejoin="round"/></svg><svg class="a" style="left:15px;top:145px" width="19" height="19" viewBox="0 0 19 19"><rect x="1.0" y="1.0" width="3.2" height="3.2" fill="#2c2e50"/><rect x="7.5" y="1.0" width="3.2" height="3.2" fill="#2c2e50"/><rect x="14.0" y="1.0" width="3.2" height="3.2" fill="#2c2e50"/><rect x="1.0" y="7.5" width="3.2" height="3.2" fill="#2c2e50"/><rect x="7.5" y="7.5" width="3.2" height="3.2" fill="#2c2e50"/><rect x="14.0" y="7.5" width="3.2" height="3.2" fill="#2c2e50"/><rect x="1.0" y="14.0" width="3.2" height="3.2" fill="#2c2e50"/><rect x="7.5" y="14.0" width="3.2" height="3.2" fill="#2c2e50"/><rect x="14.0" y="14.0" width="3.2" height="3.2" fill="#2c2e50"/></svg><div class="a" style="left:7px;top:182px;width:32px;height:0;border-top:1px dotted #c5c5d6"></div><div class="a" style="left:7px;top:921px;width:32px;height:0;border-top:1px dotted #c5c5d6"></div><div class="a" style="left:4px;top:203px;width:4px;height:16px;background:#4a50d0;border-radius:2px"></div><svg class="a" style="left:13px;top:201px" width="22" height="20" viewBox="0 0 22 20"><polygon points="5.2,0.4 15.8,0.4 21.4,10 16.5,19.8 5,19.8 0.1,10" fill="#4a48d2"/><path d="M11 1 H15.8 L21.4 10 L16.5 19.8 H11 Z" fill="#7d86ea" opacity="0.55"/><path d="M11 1.5 V19" stroke="#3a3ac8" stroke-width="1.6"/><path d="M4 8 L8 5 L9 9 L5 12 L8 15" fill="none" stroke="#9aa4f4" stroke-width="1"/><circle cx="16" cy="6" r="1.4" fill="#e8e8f8"/><circle cx="15" cy="14.5" r="1.3" fill="#e8e8f8"/><circle cx="6" cy="10" r="0.9" fill="#d04fb8"/><circle cx="9" cy="15.5" r="0.9" fill="#d04fb8"/><circle cx="18" cy="11" r="0.9" fill="#d04fb8"/><circle cx="7" cy="4" r="0.8" fill="#d04fb8"/></svg><svg class="a" style="left:13px;top:241px" width="24" height="24" viewBox="0 0 24 24"><path d="M2.5 7.5 L11.5 2 L14.5 3.5 L5.5 9 Z" fill="#7c83e6"/><path d="M6.5 10 L15.5 4.5 L18.5 6 L9.5 11.5 Z" fill="#7c83e6"/><path d="M10.5 12.5 L19.5 7 L22.5 8.5 L13.5 14 Z" fill="#7c83e6"/><path d="M2.5 7.5 L5.5 9 V19.5 L2.5 18 Z" fill="#4a4fd8"/><path d="M6.5 10 L9.5 11.5 V22 L6.5 20.5 Z" fill="#4a4fd8"/><path d="M10.5 12.5 L13.5 14 V24 L10.5 22.5 Z" fill="#4a4fd8"/><path d="M13.5 14 L22.5 8.5 V19 L13.5 24 Z" fill="#ececf4"/><path d="M22.5 8.5 V19 L13.5 24" fill="none" stroke="#6c6e8a" stroke-width="1.5"/></svg><svg class="a" style="left:14px;top:286px" width="21" height="19" viewBox="0 0 21 19"><rect x="0.5" y="4" width="14" height="14" fill="#a3a5b9"/><rect x="2.5" y="7" width="2.2" height="10" fill="#f4f4f8"/><rect x="6" y="11" width="2.2" height="6" fill="#f4f4f8"/><rect x="10" y="6" width="2.2" height="11" fill="#f4f4f8"/><rect x="10" y="0.5" width="10" height="12" fill="#6f7a80"/><path d="M11 2 H15 M17 2 L19 4 L17 6 L19 8 L17 10" stroke="#2e6b5a" stroke-width="1.6" fill="none"/><rect x="14" y="12.5" width="7" height="6" fill="#a3a5b9"/><rect x="15.5" y="13.5" width="4" height="3" fill="#f0f0f4"/><path d="M14 16 H21 V18.5 H14 Z" fill="#2e6b5a"/><rect x="3" y="16.5" width="2" height="1.5" fill="#2e6b5a"/><rect x="7" y="16.5" width="2" height="1.5" fill="#2e6b5a"/></svg><svg class="a" style="left:14px;top:327px" width="20" height="20" viewBox="0 0 20 20"><rect x="1" y="1" width="18" height="18" rx="3.5" fill="#7d83e4"/><rect x="3.5" y="3" width="14" height="13.5" rx="1" fill="#4043d2"/><path d="M7 7.5 L14 13.5 M14 7.5 L7 13.5" stroke="#9c9cb4" stroke-width="1.2"/><circle cx="7.3" cy="7.6" r="1.9" fill="#fff"/><circle cx="13.5" cy="7.6" r="1.9" fill="#fff"/><circle cx="7.3" cy="13.4" r="1.9" fill="#fff"/><circle cx="13.5" cy="13.4" r="1.9" fill="#fff"/></svg><svg class="a" style="left:13px;top:369px" width="20" height="21" viewBox="0 0 20 21"><path d="M1.5 6 L11 0.5 L14 3 L5 9 Z" fill="#4a4fd8"/><path d="M1.5 6 L5 9 L6 11 L3 11 Z" fill="#8a90e8"/><path d="M13 5 L19.5 8 V17 L15 15 Z" fill="#2e6b5a"/><path d="M1 11 L9 13 L14 17 L13 20 L4 17 Z" fill="#6c6e8a"/><path d="M4 15 L12 19" stroke="#2e6b5a" stroke-width="1"/><circle cx="10.5" cy="10" r="2.6" fill="#f4f4f8"/></svg><svg class="a" style="left:13px;top:411px" width="22" height="21" viewBox="0 0 22 21"><rect x="0.5" y="0.8" width="21" height="14.2" rx="1.6" fill="#2c2e50"/><rect x="2.5" y="3" width="5.5" height="1.3" fill="#cdc4e2"/><circle cx="5.5" cy="9.3" r="2.8" fill="#a9aabd"/><rect x="10.5" y="3.2" width="1.6" height="9" fill="#8d8fb0"/><rect x="13.6" y="8" width="1.4" height="4.2" fill="#8d8fb0"/><rect x="16.7" y="5.5" width="1.6" height="6.7" fill="#8d8fb0"/><rect x="1" y="15" width="20" height="1.6" fill="#8d8fa6"/><path d="M8 19.5 H14" stroke="#a3a5b9" stroke-width="1.6"/><path d="M11 16.5 V19" stroke="#8d8fa6" stroke-width="2"/></svg><svg class="a" style="left:14px;top:452px" width="23" height="23" viewBox="0 0 23 23"><path d="M1.5 3.5 L10 0.5 L18.5 3.5 V16 L10 19.5 L1.5 16 Z" fill="#a3a5b9"/><path d="M1.5 3.5 L10 6.5 L18.5 3.5 M10 6.5 V19.5 M1.5 9.8 L10 12.8 L18.5 9.8" stroke="#d6d7e0" stroke-width="0.9" fill="none"/><path d="M5 6 L11.5 4 L15.5 7 V12.5 L10 14.5 L5 12 Z" fill="#b44cc8"/><rect x="3" y="5" width="1.6" height="3.5" fill="#2e6b5a"/><rect x="3" y="11.5" width="1.6" height="3.5" fill="#2e6b5a"/><rect x="15.5" y="6" width="1.4" height="3" fill="#2e6b5a"/><rect x="8.5" y="16" width="13.8" height="6.8" rx="1.5" fill="#3d42d2"/><text x="15.4" y="21.4" font-size="5.6" font-family="Liberation Sans" font-weight="bold" fill="#eef" text-anchor="middle">NEW</text></svg><svg class="a" style="left:13px;top:494px" width="24" height="24" viewBox="0 0 24 24"><rect x="0.6" y="0.9" width="20.5" height="20" rx="4.5" fill="#ffffff"/><polygon points="10.9,2 17.5,5 19.2,12 14.9,17.6 7,17.6 2.7,12 4.4,5" fill="#4446d4"/><circle cx="10.9" cy="10.2" r="4.4" fill="none" stroke="#f2f2fa" stroke-width="1.4"/><rect x="8.9" y="8.3" width="4" height="3.8" rx="1" fill="#8f94ea"/><path d="M10.9 3.5 V6 M10.9 14.5 V17 M4.5 10.2 H6.5 M15.3 10.2 H17.3" stroke="#f2f2fa" stroke-width="1"/><rect x="9.2" y="16.5" width="13.8" height="6.8" rx="1.5" fill="#3d42d2"/><text x="16.1" y="21.9" font-size="5.6" font-family="Liberation Sans" font-weight="bold" fill="#eef" text-anchor="middle">NEW</text></svg><svg class="a" style="left:16px;top:937px" width="18" height="18" viewBox="0 0 18 18"><path d="M2 2 L9 9 L2 16 M8 2 L15 9 L8 16" fill="none" stroke="#2c2e50" stroke-width="1.8"/></svg><svg class="a" style="left:14px;top:970px" width="20" height="20" viewBox="0 0 20 20"><circle cx="10" cy="10" r="8.6" fill="none" stroke="#2c2e50" stroke-width="1.8"/><circle cx="10" cy="10" r="3.8" fill="none" stroke="#2c2e50" stroke-width="1.8"/><path d="M4 4 L7.3 7.3 M16 4 L12.7 7.3 M4 16 L7.3 12.7 M16 16 L12.7 12.7" stroke="#2c2e50" stroke-width="1.8"/></svg><svg class="a" style="left:15px;top:1005px" width="18" height="18" viewBox="0 0 18 18"><path d="M1.5 0.5 V16.5 H17.5" fill="none" stroke="#2c2e50" stroke-width="1.8"/><path d="M4 7 L7.5 3 L11 6 L16 1.5" fill="none" stroke="#2c2e50" stroke-width="1.6"/><path d="M5.5 9 V14.5 M9.5 8 V14.5 M13.5 7 V14.5" stroke="#2c2e50" stroke-width="1.8"/></svg><div class="a" style="left:15px;top:1043px;width:18px;height:18px;border-radius:50%;background:#555779;color:#fff;font-size:11px;line-height:18px;text-align:center">K</div>
</body></html>
